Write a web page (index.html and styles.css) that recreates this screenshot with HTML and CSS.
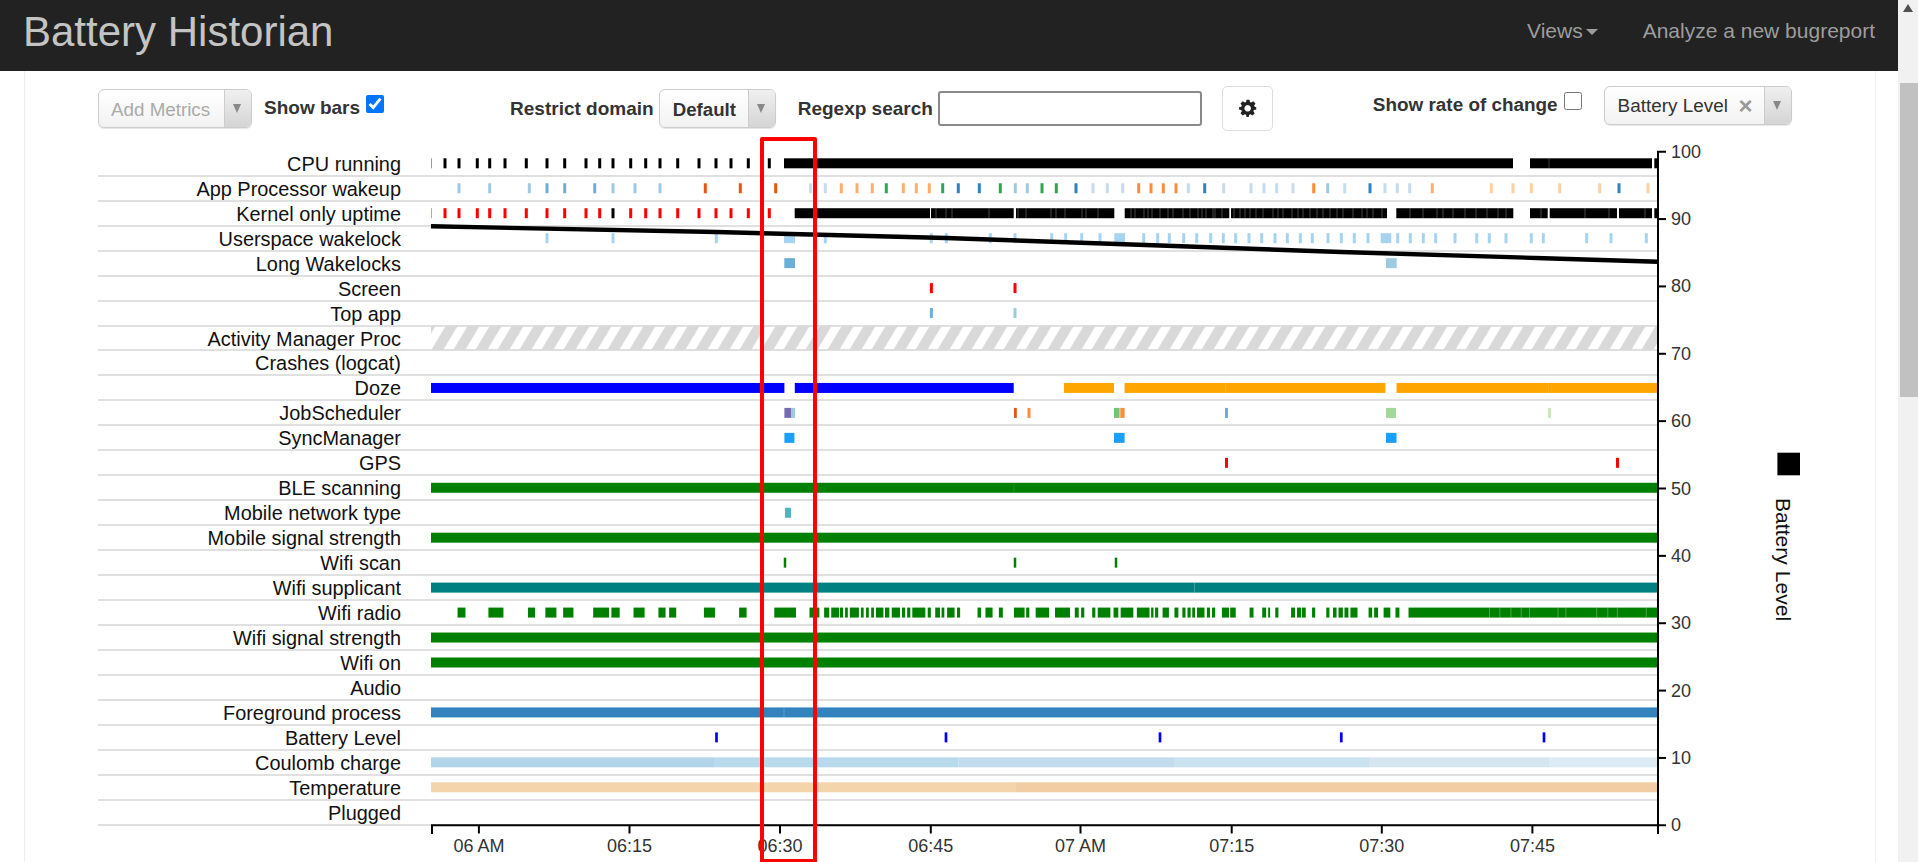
FILE: index.html
```html
<!DOCTYPE html>
<html lang="en">
<head>
<meta charset="utf-8">
<title>Battery Historian</title>
<link rel="stylesheet" href="styles.css">
</head>
<body>
<header class="navbar">
  <a class="brand">Battery Historian</a>
  <nav class="nav-links">
    <a class="nav-link">Views<span class="caret"></span></a>
    <a class="nav-link">Analyze a new bugreport</a>
  </nav>
</header>
<main class="content">
  <div class="toolbar">
    <div class="select select-metrics"><span class="select-value placeholder">Add Metrics</span><span class="select-arrow"></span></div>
    <label class="check check-bars">Show bars <input type="checkbox" checked></label>
    <label class="field field-domain">Restrict domain</label>
    <div class="select select-domain"><span class="select-value strong">Default</span><span class="select-arrow"></span></div>
    <label class="field field-regexp">Regexp search</label>
    <input class="search" type="text">
    <button class="gear" type="button" aria-label="Settings">
      <svg class="gear-icon" viewBox="0 0 24 24" width="18" height="18"><path d="M10 1h4l.6 3.100 1.700.7L19 3l3 3-1.800 2.700.7 1.700L23 11v3l-3.100.6-.7 1.700L21 19l-3 3-2.700-1.800-1.700.7L13 24h-3l-.6-3.100-1.700-.7L5 22l-3-3 1.800-2.700-.7-1.700L0 14v-3l3.100-.6.7-1.700L2 6l3-3 2.700 1.800 1.700-.7zM11.500 8a4.400 4.400 0 1 0 .1 0z" fill="#222" fill-rule="evenodd"/></svg>
    </button>
    <label class="check check-rate">Show rate of change <input type="checkbox"></label>
    <div class="select select-series"><span class="select-value">Battery Level</span><span class="select-clear">×</span><span class="select-arrow"></span></div>
  </div>
  <div class="chart">
    <div class="row"><span class="row-label">CPU running</span></div>
    <div class="row"><span class="row-label">App Processor wakeup</span></div>
    <div class="row"><span class="row-label">Kernel only uptime</span></div>
    <div class="row"><span class="row-label">Userspace wakelock</span></div>
    <div class="row"><span class="row-label">Long Wakelocks</span></div>
    <div class="row"><span class="row-label">Screen</span></div>
    <div class="row"><span class="row-label">Top app</span></div>
    <div class="row"><span class="row-label">Activity Manager Proc</span></div>
    <div class="row"><span class="row-label">Crashes (logcat)</span></div>
    <div class="row"><span class="row-label">Doze</span></div>
    <div class="row"><span class="row-label">JobScheduler</span></div>
    <div class="row"><span class="row-label">SyncManager</span></div>
    <div class="row"><span class="row-label">GPS</span></div>
    <div class="row"><span class="row-label">BLE scanning</span></div>
    <div class="row"><span class="row-label">Mobile network type</span></div>
    <div class="row"><span class="row-label">Mobile signal strength</span></div>
    <div class="row"><span class="row-label">Wifi scan</span></div>
    <div class="row"><span class="row-label">Wifi supplicant</span></div>
    <div class="row"><span class="row-label">Wifi radio</span></div>
    <div class="row"><span class="row-label">Wifi signal strength</span></div>
    <div class="row"><span class="row-label">Wifi on</span></div>
    <div class="row"><span class="row-label">Audio</span></div>
    <div class="row"><span class="row-label">Foreground process</span></div>
    <div class="row"><span class="row-label">Battery Level</span></div>
    <div class="row"><span class="row-label">Coulomb charge</span></div>
    <div class="row"><span class="row-label">Temperature</span></div>
    <div class="row"><span class="row-label">Plugged</span></div>
    <svg id="plot" class="plot" viewBox="98 130 1710 732" width="1710" height="732"></svg>
  </div>
  <div class="selection"></div>
</main>
<div class="scrollbar"><span class="scroll-up"></span><span class="scroll-thumb"></span></div>
<script src="chart.js"></script>
</body>
</html>
```
FILE: styles.css
```css
* { box-sizing: border-box; }
html, body { margin: 0; height: 862px; overflow: hidden; background: #fff; }
body { font-family: "Liberation Sans", Arial, sans-serif; color: #333; }

.navbar {
  height: 71px; width: 1898px; background: #222;
  display: flex; justify-content: space-between; align-items: flex-start;
  padding: 8px 23px 0 23px;
}
.brand { font-size: 42px; line-height: 48px; color: #c4c4c4; }
.nav-links { display: flex; gap: 45px; padding-top: 9px; }
.nav-link { font-size: 21px; line-height: 28px; color: #9d9d9d; }
.caret {
  display: inline-block; width: 0; height: 0; margin-left: 3px; vertical-align: middle;
  border-top: 6px solid #9d9d9d; border-left: 6px solid transparent; border-right: 6px solid transparent;
}

.content {
  position: relative; width: 1852px; height: 791px; margin-left: 24px;
  border-left: 1px solid #eee; border-right: 1px solid #eee;
  padding-left: 73px;
}

.toolbar { display: flex; align-items: flex-start; height: 80.840px; padding-top: 15px; font-size: 19px; }
.select {
  display: flex; align-items: center; position: relative; height: 39px;
  border: 1px solid #ccc; border-radius: 6px; background: linear-gradient(#fff, #f2f2f2);
  box-shadow: 0 1px 1px rgba(0,0,0,.1);
  font-size: 18.900px; color: #333;
}
.select-value { flex: 1; padding-left: 13px; padding-top: 2px; white-space: nowrap; }
.select-series .select-value { padding-top: 0; }
.placeholder { color: #aaa; font-size: 18.800px; padding-left: 12px; }
.strong { font-weight: 700; font-size: 18.700px; }
.select-arrow {
  align-self: stretch; width: 27px; border-left: 1px solid #ccc; border-radius: 0 5px 5px 0;
  background: linear-gradient(#f0f0f0, #d4d4d4); position: relative;
}
.select-arrow::after {
  content: ""; position: absolute; left: 8px; top: 14px; width: 0; height: 0;
  border-top: 9px solid #888; border-left: 4.500px solid transparent; border-right: 4.500px solid transparent;
}
.select-clear { font-size: 24px; font-weight: 700; line-height: 20px; color: #999; margin-right: 11px; }
.select-metrics { width: 154px; margin-top: 3px; }
.select-domain { width: 117px; margin: 3px 0 0 5px; }
.select-series { width: 188px; margin: 0 0 0 22px; }

.check, .field { font-weight: 700; color: #333; white-space: nowrap; display: flex; align-items: center; }
.check input { margin: 0 0 0 6px; width: 18px; height: 18px; }
.check-bars { margin: 8px 0 0 12px; height: 28px; }
.check-rate { margin: 6px 0 0 100px; height: 26px; font-size: 18.900px; }
.check-rate input { position: relative; top: -4px; }
.check-bars input { position: relative; top: -4px; accent-color: #0075ff; }
.field-domain { margin: 9px 0 0 126px; height: 28px; }
.field-regexp { margin: 9px 0 0 22px; height: 28px; }
.search {
  width: 264px; height: 35px; margin: 5px 0 0 5px;
  border: 2px solid #8a8a8a; border-radius: 3px; background: #fff;
}
.gear {
  width: 51px; height: 45px; margin-left: 20px; padding: 0;
  display: flex; align-items: center; justify-content: center;
  background: #fff; border: 1px solid #ddd; border-radius: 5px;
}
.gear-icon { position: relative; top: -1px; left: 1px; }

.chart { position: relative; width: 1560px; }
.row {
  height: 24.960px; border-bottom: 2px solid #e0e0e0;
  width: 1560px; padding-right: 1257px; text-align: right;
  font-size: 19.900px; line-height: 24px; color: #111; white-space: nowrap;
}
.plot { position: absolute; left: 0; top: -21.840px; overflow: visible; }
.axis-label { font-size: 18px; fill: #333; }
.legend-label { font-size: 21.100px; fill: #111; }

.selection {
  position: absolute; left: 735px; top: 65.500px; width: 57px; height: 726px;
  border: 4.300px solid #f00; border-radius: 2px;
}

.scrollbar { position: fixed; top: 0; right: 0; width: 20px; height: 862px; background: #f1f1f1; }
.scroll-up {
  position: absolute; left: 5px; top: 4px; width: 0; height: 0;
  border-bottom: 8px solid #505050; border-left: 5.500px solid transparent; border-right: 5.500px solid transparent;
}
.scroll-thumb { position: absolute; left: 2px; top: 83px; width: 18px; height: 314px; background: #c1c1c1; }
```
FILE: chart.js
```js
const C = { b1:'#3182bd', b2:'#6baed6', b3:'#9ecae1', b4:'#c6dbef', o1:'#e6550d', o2:'#fd8d3c', o3:'#fdae6b', o4:'#fdd0a2',
            g1:'#31a354', g2:'#74c476', g3:'#a1d99b', g4:'#c7e9c0', green:'#008000', wl:'#a6d3ef', red:'#f00', sync:'#1a9fff' };
const svg = document.getElementById('plot');
const NS = 'http://www.w3.org/2000/svg';
function el(name, attrs, text) {
  const e = document.createElementNS(NS, name);
  for (const k in attrs) e.setAttribute(k, attrs[k]);
  if (text) e.textContent = text;
  svg.appendChild(e);
  return e;
}
const rowY = i => 158.3 + 24.96 * i;
function bar(row, x0, x1, fill, opacity) {
  const a = { x: x0, y: rowY(row), width: x1 - x0, height: 10, fill };
  if (opacity) a.opacity = opacity;
  el('rect', a);
}
function ticks(row, xs, fill, w) {
  w = w || 3;
  xs.forEach(x => bar(row, x - w / 2, x + w / 2, fill));
}
function seps(row, xs, o) {
  xs.forEach(x => bar(row, x - .4, x + .4, '#fff', o || .3));
}

const defs = el('defs', {});
const pat = document.createElementNS(NS, 'pattern');
for (const [k, v] of Object.entries({ id:'hatch', width:22, height:25, patternUnits:'userSpaceOnUse', x:431, y:325.4 })) pat.setAttribute(k, v);
['0,25 15,0 27,0 12,25', '-22,25 -7,0 5,0 -10,25'].forEach(points => {
  const p = document.createElementNS(NS, 'polygon');
  p.setAttribute('points', points);
  p.setAttribute('fill', '#d9d9d9');
  pat.appendChild(p);
});
defs.appendChild(pat);

/* CPU running & Kernel only uptime share the wake-up ticks */
const cpu = [445,459,477.3,489.7,505,526.3,547,564.7,586,599.7,613,630.7,645.7,660,677.7,699,716,731,748.3,769.3];
bar(0, 431, 432, '#999');
ticks(0, cpu, '#000');
bar(0, 784, 1513, '#000'); bar(0, 1530, 1652, '#000'); bar(0, 1654.3, 1658, '#000');
seps(0, [1549]);

/* App Processor wakeup */
const apw = {
  b3: [459,489.7,529.3,613,635,660,1015.3,1027.3,1327.7],
  b2: [547,564.7,594.7],
  b4: [810.7,825.3,1093,1107.3,1122.7,1188.3,1223.7,1251,1264,1276.7,1293,1344.7,1385,1397.3,1409.7],
  o1: [705.3,740.3,775.7],
  o2: [1138.7,1151,1163.3,1176,1313.7],
  o3: [841.3,857,872.3,903.3,916.3,929.3,1432.3],
  o4: [1491.3,1513,1531.3,1559.7,1599.7,1648],
  g1: [886.3,942.7,1000.3,1042,1056.3],
  b1: [958.3,979.3,1076,1204.7,1370,1619]
};
for (const k in apw) ticks(1, apw[k], C[k]);

/* Kernel only uptime */
bar(2, 431, 432, '#f88');
ticks(2, cpu.filter(x => x !== 613), C.red);
ticks(2, [613], '#000');
[[794.7,930],[931,1013.7],[1016,1114.3],[1124.7,1229.3],[1231,1387],[1396.3,1513.3],[1530,1547.7],[1549.7,1617],[1619,1652],[1654.3,1658]]
  .forEach(s => bar(2, s[0], s[1], '#000'));
seps(2, [936,946,952,989,1018,1026,1051,1056,1065,1082,1086,1098,1131,1135,1144,1148,1152,1160,1168,1173,1183,1190,1198,1202,1206,1213,1215,1222,1234,1240,1245,1250,1256,1263,1273,1278,1283,1292,1298,1303,1310,1317,1323,1330,1337,1343,1353,1362,1367,1373,1382,1410,1423,1437,1443,1453,1465,1476,1487,1498,1506,1541,1585,1609,1645], .35);

/* Userspace wakelock */
ticks(3, [547,613,716.3,825.3,931.3,946.3,990.3,1015,1051.7,1065.7,1081.7,1100,1143.7,1157.7,1169.3,1183.7,1196.7,1210.7,1223.3,1235.7,1249,1261.7,1275,1287.3,1300.3,1312.3,1328,1341.3,1354.3,1368,1397.7,1410.3,1423.3,1435.7,1455,1476.7,1489.3,1506,1531.3,1543.3,1586.7,1611,1646.3], C.wl);
bar(3, 784, 795, C.wl); bar(3, 1114.3, 1125, C.wl); bar(3, 1380.7, 1391.3, C.wl);

/* Long Wakelocks */
bar(4, 784.3, 795, C.b2); bar(4, 1386, 1396.7, C.b3);

/* Screen, Top app */
ticks(5, [931.4,1015], C.red);
ticks(6, [931.4], C.b2); ticks(6, [1015], C.b3);

/* Activity Manager Proc */
el('rect', { x:431, y:325.4, width:1227, height:25, fill:'url(#hatch)' });

/* Doze */
bar(9, 431, 784.4, '#00f'); bar(9, 794.8, 1013.7, '#00f');
bar(9, 1064, 1114, '#ffa500'); bar(9, 1124.6, 1385.4, '#ffa500'); bar(9, 1396.5, 1658, '#ffa500');
seps(9, [1225.6, 1548.3], .2);

/* JobScheduler */
bar(10, 784.4, 791, '#756bb1'); bar(10, 791, 795, C.b3);
bar(10, 1014, 1016.8, C.o1); bar(10, 1027.5, 1030.5, C.o2);
bar(10, 1114, 1119.5, C.g2); bar(10, 1119.5, 1121, C.o3); bar(10, 1121, 1124.6, C.o2);
bar(10, 1225, 1228, C.b2); bar(10, 1386, 1396, C.g3); bar(10, 1548, 1551, C.g4);

/* SyncManager */
[[784.4,794.4],[1114,1124.6],[1386,1396.5]].forEach(s => bar(11, s[0], s[1], C.sync));

/* GPS */
ticks(12, [1226.5,1617.5], C.red);

/* long green tracks */
[13, 15, 19, 20].forEach(r => bar(r, 431, 1658, C.green));
seps(13, [1014], .15);

/* Mobile network type, Wifi scan */
bar(14, 785, 791, '#4cb5bd');
ticks(16, [785,1015,1116], C.green, 2.5);

/* Wifi supplicant */
bar(17, 431, 1658, '#008080');
seps(17, [1194.4], .3);

/* Wifi radio: spans measured on two stretches of the timeline */
const radioA = [[95,115],[173,211],[273,291],[317,345],[362,388],[438,478],[484,505],[540,568],[603,621],[630,648],[718,746],[807,826],[896,951],[985,1010],[1022,1035],[1040,1060],[1062,1070],[1075,1082],[1087,1110],[1115,1122],[1128,1135],[1141,1148],[1153,1172],[1176,1187],[1193,1214],[1219,1227],[1232,1240],[1245,1278],[1284,1292],[1303,1315],[1319,1326],[1333,1352],[1358,1366],[1410,1419],[1430,1448],[1464,1474],[1502,1529],[1533,1541],[1557,1568]];
const radioB = [[0,23],[38,76],[88,98],[104,112],[132,140],[146,178],[186,198],[204,236],[245,277],[281,287],[291,299],[310,326],[340,350],[360,368],[373,381],[385,392],[397,416],[422,430],[435,443],[460,478],[481,495],[530,540],[562,572],[577,582],[595,603],[635,645],[650,660],[662,672],[688,696],[724,732],[741,750],[755,766],[770,780],[785,803],[831,840],[845,855],[869,886],[899,909],[932,1562]];
radioA.forEach(s => bar(18, 420 + s[0] / 2.529, 420 + s[1] / 2.529, C.green));
radioB.forEach(s => bar(18, 1040 + s[0] / 2.529, 1040 + s[1] / 2.529, C.green));
seps(18, [1137,1163,1191,1217,1238,1310,1330,1408,1436,1460,1533].map(z => 1040 + z / 2.529), .35);

/* Foreground process */
bar(22, 431, 1658, C.b1);
seps(22, [784], .25);

/* Battery Level */
ticks(23, [716.5,946,1160,1341.3,1544], '#00f', 2.7);

/* Coulomb charge */
[[431,714,'#b2d4e9'],[714,958.3,'#b9d9ec'],[958.3,1174,'#c2dced'],[1174,1369,'#cae1ef'],[1369,1549,'#d5e6f1'],[1549,1658,'#dcebf4']]
  .forEach(s => bar(24, s[0], s[1], s[2]));

/* Temperature */
bar(25, 431, 1016, '#f4d4ab'); bar(25, 1016, 1658, '#f2cca2');

/* battery level line */
el('polyline', { points:'431,226.3 716,232 946,238 1160,245.5 1341,252 1544,258.2 1658,261.7', fill:'none', stroke:'#000', 'stroke-width':4.4 });

/* axes */
const axis = { fill:'none', stroke:'#000', 'stroke-width':2 };
el('path', Object.assign({ d:'M432 834V825.300H1658V834' }, axis));
el('path', Object.assign({ d:'M1666 151.700H1658V825.300H1666' }, axis));
[[478.9,'06 AM'],[629.5,'06:15'],[780,'06:30'],[930.8,'06:45'],[1080.5,'07 AM'],[1231.7,'07:15'],[1381.8,'07:30'],[1532.4,'07:45']].forEach(t => {
  el('path', Object.assign({ d:`M${t[0]} 825.300V833.500` }, axis));
  el('text', { x:t[0], y:851.500, 'text-anchor':'middle', class:'axis-label' }, t[1]);
});
for (let v = 0; v <= 100; v += 10) {
  const y = 825.3 - v * 6.736;
  if (v > 0 && v < 100) el('path', Object.assign({ d:`M1658 ${y}H1666` }, axis));
  el('text', { x:1671, y:y + 6, class:'axis-label' }, String(v));
}

/* legend */
el('rect', { x:1777.400, y:452.700, width:22.600, height:22.600, fill:'#000' });
el('text', { x:0, y:0, class:'legend-label', transform:'translate(1776 498) rotate(90)' }, 'Battery Level');
```
